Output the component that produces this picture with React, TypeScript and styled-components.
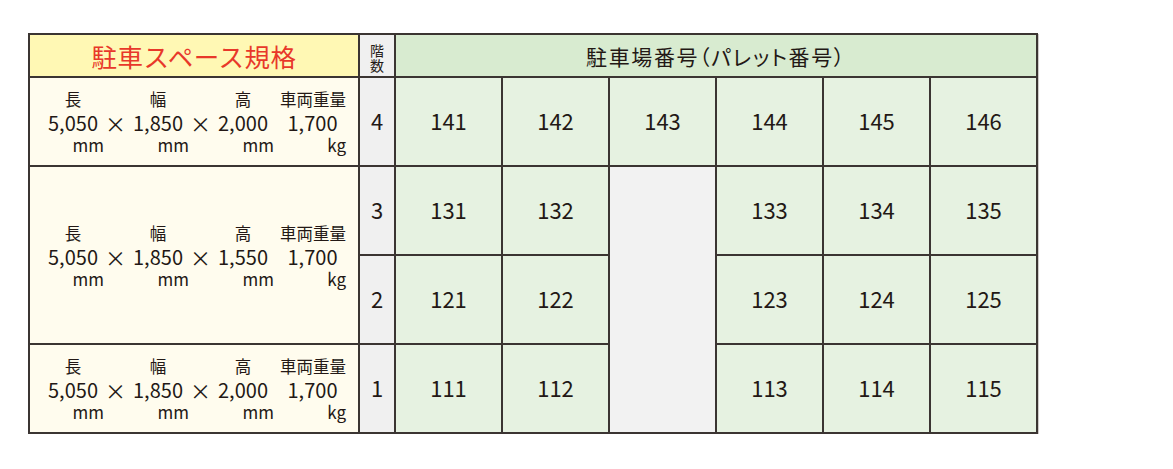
import React from "react";
import styled, { createGlobalStyle } from "styled-components";

const GlobalStyle = createGlobalStyle`
  body {
    margin: 0;
    background: #fff;
    font-family: "Noto Sans CJK JP", "Noto Sans", sans-serif;
    color: #231815;
  }
`;

const Page = styled.div`
  padding: 33px 0 0 28px;
`;

const Table = styled.table`
  border-collapse: collapse;
  table-layout: fixed;
  width: 1010px;
  border: 2.5px solid #3b3532;
  box-shadow: 1px 1px 0 #cfcbc9;
`;

const Cell = styled.td<{ $tone?: "spec" | "floor" | "green" | "empty" }>`
  border: 2px solid #3b3532;
  padding: 0 0 3px;
  text-align: center;
  vertical-align: middle;
  height: 84px;
  font-size: 22px;
  background: ${({ $tone }) =>
    $tone === "spec"
      ? "#fffcee"
      : $tone === "floor"
      ? "#f0f0f0"
      : $tone === "empty"
      ? "#f2f2f2"
      : "#e6f2e1"};
`;

const HeadCell = styled.th<{ $tone: "yellow" | "floor" | "green" }>`
  border: 2px solid #3b3532;
  padding: 0;
  height: 41px;
  font-weight: 400;
  text-align: center;
  vertical-align: middle;
  background: ${({ $tone }) =>
    $tone === "yellow" ? "#fff8b4" : $tone === "floor" ? "#f0f0f0" : "#d8ebd0"};
`;

const SpecTitle = styled.span`
  color: #e8382a;
  font-size: 25.5px;
  letter-spacing: 0.5px;
`;

const FloorTitle = styled.span`
  display: block;
  font-size: 14px;
  line-height: 15px;
  position: relative;
  top: 2px;
`;

const PalletTitle = styled.span`
  font-size: 21px;
  letter-spacing: 1.6px;
  font-feature-settings: "palt";
`;

const SpecGrid = styled.div`
  display: grid;
  grid-template-columns: 62px 23px 62px 23px 62px 5px 67px;
  justify-content: center;
  align-items: end;
  padding-top: 2px;
`;

const Label = styled.span<{ $col: number; $span?: number; $align?: string }>`
  grid-column: ${({ $col, $span }) => `${$col} / span ${$span ?? 1}`};
  grid-row: 1;
  font-size: 16.5px;
  line-height: 24px;
  text-align: ${({ $align }) => $align ?? "center"};
`;

const Value = styled.span<{ $col: number }>`
  grid-column: ${({ $col }) => $col};
  grid-row: 2;
  font-size: 20px;
  line-height: 24px;
  text-align: center;
`;

const Times = styled.span<{ $col: number }>`
  grid-column: ${({ $col }) => $col};
  grid-row: 2;
  font-size: 21px;
  line-height: 24px;
  text-align: center;
`;

const Unit = styled.span<{ $col: number }>`
  grid-column: ${({ $col }) => $col};
  grid-row: 3;
  font-size: 17px;
  line-height: 20px;
  text-align: right;
`;

const Spec = ({ height }: { height: string }) => (
  <SpecGrid>
    <Label $col={1}>長</Label>
    <Label $col={3}>幅</Label>
    <Label $col={5}>高</Label>
    <Label $col={6} $span={2} $align="right">車両重量</Label>
    <Value $col={1}>5,050</Value>
    <Times $col={2}>×</Times>
    <Value $col={3}>1,850</Value>
    <Times $col={4}>×</Times>
    <Value $col={5}>{height}</Value>
    <Value $col={7}>1,700</Value>
    <Unit $col={1}>mm</Unit>
    <Unit $col={3}>mm</Unit>
    <Unit $col={5}>mm</Unit>
    <Unit $col={7}>kg</Unit>
  </SpecGrid>
);

const Numbers = ({ nums }: { nums: string[] }) => (
  <>
    {nums.map((n) => (
      <Cell key={n}>{n}</Cell>
    ))}
  </>
);

export default function App() {
  return (
    <Page>
      <GlobalStyle />
      <Table>
        <colgroup>
          <col style={{ width: 330 }} />
          <col style={{ width: 36 }} />
          <col />
          <col />
          <col />
          <col />
          <col />
          <col />
        </colgroup>
        <thead>
          <tr>
            <HeadCell $tone="yellow">
              <SpecTitle>駐車スペース規格</SpecTitle>
            </HeadCell>
            <HeadCell $tone="floor">
              <FloorTitle>階</FloorTitle>
              <FloorTitle>数</FloorTitle>
            </HeadCell>
            <HeadCell $tone="green" colSpan={6}>
              <PalletTitle>駐車場番号（パレット番号）</PalletTitle>
            </HeadCell>
          </tr>
        </thead>
        <tbody>
          <tr>
            <Cell $tone="spec">
              <Spec height="2,000" />
            </Cell>
            <Cell $tone="floor">4</Cell>
            <Numbers nums={["141", "142", "143", "144", "145", "146"]} />
          </tr>
          <tr>
            <Cell $tone="spec" rowSpan={2}>
              <Spec height="1,550" />
            </Cell>
            <Cell $tone="floor">3</Cell>
            <Numbers nums={["131", "132"]} />
            <Cell $tone="empty" rowSpan={3} />
            <Numbers nums={["133", "134", "135"]} />
          </tr>
          <tr>
            <Cell $tone="floor">2</Cell>
            <Numbers nums={["121", "122", "123", "124", "125"]} />
          </tr>
          <tr>
            <Cell $tone="spec">
              <Spec height="2,000" />
            </Cell>
            <Cell $tone="floor">1</Cell>
            <Numbers nums={["111", "112", "113", "114", "115"]} />
          </tr>
        </tbody>
      </Table>
    </Page>
  );
}
